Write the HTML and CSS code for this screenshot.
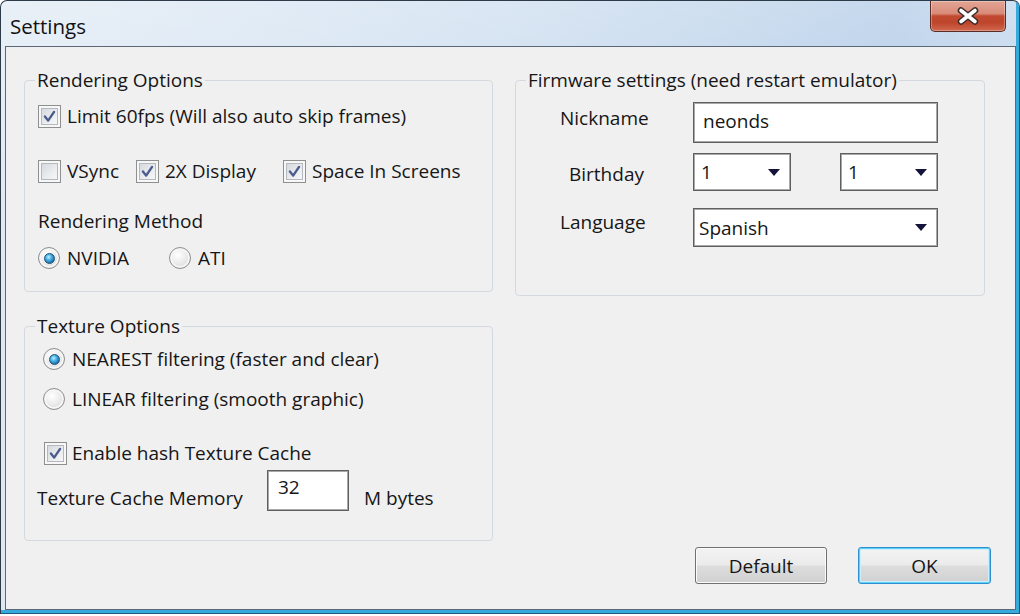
FILE: index.html
```html
<!DOCTYPE html>
<html lang="en">
<head>
<meta charset="utf-8">
<title>Settings</title>
<link rel="stylesheet" href="styles.css">
</head>
<body>
<div class="window">
  <div class="titlebar">
    <span class="title">Settings</span>
    <button class="close" aria-label="Close">
      <svg width="24" height="18" viewBox="0 0 24 18"><path d="M5 3.5 L19 14.5 M19 3.5 L5 14.5" stroke="#3a2a28" stroke-width="6.5" stroke-linecap="round" fill="none"/><path d="M5 3.5 L19 14.5 M19 3.5 L5 14.5" stroke="#ffffff" stroke-width="3.6" stroke-linecap="round" fill="none"/></svg>
    </button>
  </div>
  <div class="client">
    <div class="col col-left">
      <fieldset class="group g-render">
        <legend>Rendering Options</legend>
        <div class="row r1">
          <span class="cb"><svg viewBox="0 0 23 23"><path d="M6.5 11.5 L10 16 L16.5 6.5" /></svg></span>Limit 60fps (Will also auto skip frames)
        </div>
        <div class="row r2">
          <span class="opt o-vsync"><span class="cb empty"></span>VSync</span>
          <span class="opt o-2x"><span class="cb"><svg viewBox="0 0 23 23"><path d="M6.5 11.5 L10 16 L16.5 6.5" /></svg></span>2X Display</span>
          <span class="opt"><span class="cb"><svg viewBox="0 0 23 23"><path d="M6.5 11.5 L10 16 L16.5 6.5" /></svg></span>Space In Screens</span>
        </div>
        <div class="row r3">Rendering Method</div>
        <div class="row r4">
          <span class="opt o-nvidia"><span class="rb on"><span class="dot"></span></span>NVIDIA</span>
          <span class="opt"><span class="rb"></span>ATI</span>
        </div>
      </fieldset>
      <fieldset class="group g-texture">
        <legend>Texture Options</legend>
        <div class="row t1"><span class="rb on ind"><span class="dot"></span></span>NEAREST filtering (faster and clear)</div>
        <div class="row t2"><span class="rb ind"></span>LINEAR filtering (smooth graphic)</div>
        <div class="row t3"><span class="cb ind2"><svg viewBox="0 0 23 23"><path d="M6.5 11.5 L10 16 L16.5 6.5" /></svg></span>Enable hash Texture Cache</div>
        <div class="memrow">
          <span class="memlabel">Texture Cache Memory</span>
          <span class="tb mem">32</span>
          <span class="memunit">M bytes</span>
        </div>
      </fieldset>
    </div>
    <div class="col col-right">
      <fieldset class="group g-firm">
        <legend>Firmware settings (need restart emulator)</legend>
        <div class="frow f1">
          <span class="flabel">Nickname</span>
          <span class="tb nick">neonds</span>
        </div>
        <div class="frow f2">
          <span class="flabel">Birthday</span>
          <span class="combo small"><span>1</span><span class="arrow"></span></span>
          <span class="combo small second"><span>1</span><span class="arrow"></span></span>
        </div>
        <div class="frow f3">
          <span class="flabel">Language</span>
          <span class="combo wide"><span>Spanish</span><span class="arrow"></span></span>
        </div>
      </fieldset>
      <div class="buttons">
        <button class="btn">Default</button>
        <button class="btn ok">OK</button>
      </div>
    </div>
  </div>
</div>
</body>
</html>
```

FILE: styles.css
```css
* { box-sizing: border-box; }
html, body { margin: 0; padding: 0; }
body {
  width: 1020px;
  height: 616px;
  overflow: hidden;
  background: #ffffff;
  font-family: "Open Sans", "Noto Sans", sans-serif;
  font-size: 19px;
  color: #161616;
}

.window {
  width: 1020px;
  height: 614px;
  border: 1px solid #2d3b49;
  border-right-color: #1d5a80;
  border-bottom-color: #1d5a80;
  border-radius: 7px 7px 0 0;
  padding: 0 3px 3px 4px;
  display: flex;
  flex-direction: column;
  background:
    linear-gradient(to bottom, rgba(255,255,255,0.35), rgba(255,255,255,0) 45%),
    linear-gradient(to right, #dde8f3 0%, #d3e2f1 25%, #c6d9ed 50%, #b5cee8 72%, #a8c4e3 88%, #b9d1ea 100%);
  box-shadow: inset -3px -3px 0 #37aadd;
}

.titlebar {
  height: 45px;
  flex: none;
  display: flex;
  align-items: flex-start;
  padding-left: 5px;
}
.title {
  margin-top: 12px;
  font-size: 20.5px;
  line-height: 26px;
  color: #111;
}
.close {
  margin-left: auto;
  margin-right: 10px;
  width: 76px;
  height: 31px;
  padding: 0;
  border: 1px solid #5b2b25;
  border-top: none;
  border-radius: 0 0 5px 5px;
  background: linear-gradient(to bottom, #e3a595 0%, #d88b78 42%, #c24a30 50%, #bd452b 72%, #d0684f 100%);
  box-shadow: inset 0 0 0 1px rgba(255,255,255,0.3);
  display: flex;
  align-items: center;
  justify-content: center;
}
.close svg { display: block; }

.client {
  flex: 1;
  display: flex;
  gap: 22px;
  background: #f0f0f0;
  border: 1px solid #5a6878;
  padding: 22px 0 25px 18px;
}
.col { display: flex; flex-direction: column; }
.col-left { width: 469px; }
.col-right { width: 470px; }

.group {
  margin: 0;
  padding: 0 13px;
  min-width: 0;
  border: 1px solid #d3d9de;
  border-radius: 4px;
}
.group legend {
  padding: 0 2px;
  margin-left: -3px;
  line-height: 22px;
}
.g-render { padding-bottom: 21px; }
.g-texture { margin-top: 23px; padding-bottom: 29px; }
.g-firm { padding-bottom: 48px; }

.row {
  display: flex;
  align-items: center;
  height: 24px;
  line-height: 24px;
  white-space: nowrap;
}
.r1 { margin-top: 13px; }
.r2 { margin-top: 31px; }
.r3 { margin-top: 26px; }
.r4 { margin-top: 13px; }
.t1 { margin-top: 10px; }
.t2 { margin-top: 16px; }
.t3 { margin-top: 30px; }

.opt { display: flex; align-items: center; flex: none; }
.o-vsync { width: 98px; }
.o-2x { width: 147px; }
.o-nvidia { width: 131px; }

.cb {
  flex: none;
  width: 23px;
  height: 23px;
  margin-right: 6px;
  border: 1px solid #8e8f8f;
  background: linear-gradient(135deg, #cfd3d8 0%, #eceef0 60%, #fbfbfb 100%);
  box-shadow: inset 0 0 0 2px #f7f7f7, inset 0 0 0 3px #b4b9c0;
  display: flex;
  align-items: center;
  justify-content: center;
}
.cb svg { width: 21px; height: 21px; display: block; }
.cb path { fill: none; stroke: #4a5b8c; stroke-width: 2.6; stroke-linecap: round; stroke-linejoin: round; }
.cb.ind2 { margin-left: 6px; margin-right: 5px; }

.rb {
  flex: none;
  width: 22px;
  height: 22px;
  margin-right: 7px;
  border-radius: 50%;
  border: 1px solid #8e8f8f;
  background: radial-gradient(circle at 40% 35%, #ffffff 0%, #ececec 45%, #cfcfcf 100%);
  box-shadow: inset 0 0 0 2px #f6f6f6;
  display: flex;
  align-items: center;
  justify-content: center;
}
.rb.ind { margin-left: 5px; }
.rb .dot {
  width: 11px;
  height: 11px;
  border-radius: 50%;
  border: 1px solid #1f4f73;
  background: radial-gradient(circle at 40% 35%, #c9efff 0%, #49b4ea 35%, #16679f 80%, #0f4a74 100%);
}

.memrow {
  display: flex;
  align-items: flex-start;
  margin-top: 5px;
  height: 41px;
  white-space: nowrap;
}
.memlabel {
  width: 230px;
  margin-left: -1px;
  margin-top: 16px;
  line-height: 24px;
}
.memunit {
  margin-left: 15px;
  margin-top: 16px;
  line-height: 24px;
}

.tb {
  display: block;
  background: #ffffff;
  border: 1px solid #5f5f5f;
  box-shadow: inset 0 0 0 1px #a9a9a9;
  line-height: 24px;
}
.tb.mem { width: 82px; height: 41px; padding: 4px 0 0 10px; }
.tb.nick { width: 245px; height: 41px; padding: 6px 0 0 9px; }

.frow {
  display: flex;
  align-items: flex-start;
  white-space: nowrap;
}
.f1 { margin-top: 11px; }
.f2 { margin-top: 10px; }
.f3 { margin-top: 17px; }
.flabel {
  width: 164px;
  padding-left: 31px;
  line-height: 24px;
}
.f1 .flabel { margin-top: 4px; }
.f2 .flabel { margin-top: 9px; padding-left: 40px; }
.f3 .flabel { margin-top: 2px; }

.combo {
  display: flex;
  align-items: center;
  justify-content: space-between;
  background: #ffffff;
  border: 1px solid #5f5f5f;
  box-shadow: inset 0 0 0 1px #a9a9a9;
  padding: 0 10px 0 7px;
  line-height: 24px;
}
.combo.small { width: 98px; height: 38px; }
.combo.second { margin-left: 49px; }
.combo.wide { width: 245px; height: 39px; padding-left: 5px; }
.arrow {
  width: 0;
  height: 0;
  border-left: 6.5px solid transparent;
  border-right: 6.5px solid transparent;
  border-top: 7px solid #14143a;
}

.buttons {
  margin-top: auto;
  margin-right: -6px;
  display: flex;
  justify-content: flex-end;
  gap: 31px;
}
.btn {
  width: 132px;
  height: 37px;
  padding: 0;
  font: inherit;
  color: #161616;
  border: 1px solid #707070;
  border-radius: 3px;
  background: linear-gradient(to bottom, #f3f3f3 0%, #ebebeb 48%, #dddddd 52%, #d0d0d0 100%);
  box-shadow: inset 0 0 0 1px #fbfbfb;
}
.btn.ok {
  width: 133px;
  border-color: #2f8fd0;
  box-shadow: inset 0 0 0 1px #5fd0f5, inset 0 0 0 2px #cdeefb;
}
```
